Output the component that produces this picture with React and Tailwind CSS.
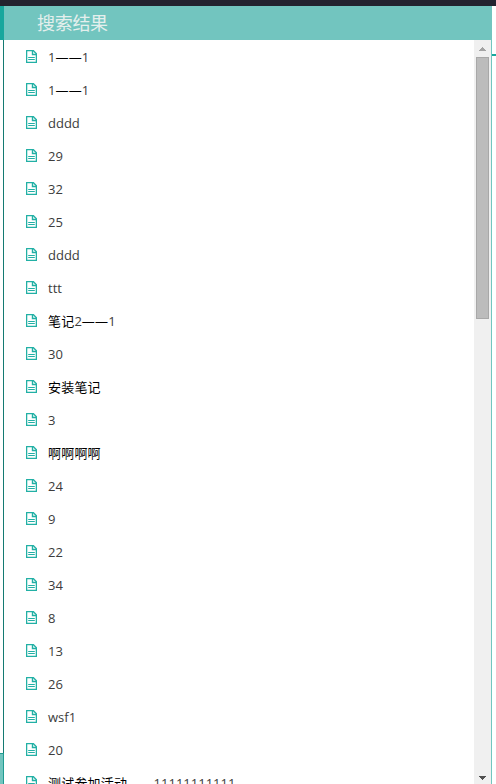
const results = [
  "1——1",
  "1——1",
  "dddd",
  "29",
  "32",
  "25",
  "dddd",
  "ttt",
  "笔记2——1",
  "30",
  "安装笔记",
  "3",
  "啊啊啊啊",
  "24",
  "9",
  "22",
  "34",
  "8",
  "13",
  "26",
  "wsf1",
  "20",
  "测试参加活动——11111111111",
];

function NoteIcon() {
  return (
    <svg className="w-[11px] h-[13px] shrink-0" viewBox="0 0 11 13" fill="none" stroke="#22b0a5">
      <path d="M.6.6H7.2L10.4 3.8V12.4H.6Z" strokeWidth="1.35" strokeLinejoin="round" />
      <path d="M6.5.8V4.5H10.2" strokeWidth="1.4" />
      <path d="M2.2 7.5H8.8M2.2 9.5H8.8" strokeWidth="1.1" />
    </svg>
  );
}

// CJK glyphs and dashes are darker than the latin text
function ResultTitle({ text }) {
  return (
    <span className="whitespace-nowrap pt-0.5">
      {text.split(/([\u4e00-\u9fff—]+)/).map((part, i) =>
        i % 2 ? (
          <span key={i} className="text-black tracking-[0.2px]">
            {part}
          </span>
        ) : (
          part
        )
      )}
    </span>
  );
}

function Scrollbar() {
  return (
    <div className="w-[17px] shrink-0 bg-[#f0f0f0] flex flex-col items-center justify-between">
      <div className="flex flex-col items-center">
        <div className="h-[17px] pt-[7px]">
          <svg className="w-[7px] h-1" viewBox="0 0 7 4" fill="#a3a3a3" shapeRendering="crispEdges">
            <path d="M3 0h1v1h1v1h1v1h1v1H0V3h1V2h1V1h1z" />
          </svg>
        </div>
        <div className="w-[13px] h-[262px] bg-[#bcbcbc] border border-[#a8a8a8]" />
      </div>
      <svg className="w-[7px] h-1 mb-1" viewBox="0 0 7 4" fill="#505050" shapeRendering="crispEdges">
        <path d="M0 0h7v1H6v1H5v1H4v1H3V3H2V2H1V1H0z" />
      </svg>
    </div>
  );
}

export default function App() {
  return (
    <div className="w-[496px] h-[784px] overflow-hidden flex flex-col bg-white font-['Open_Sans','Noto_Sans_CJK_SC',sans-serif]">
      <div className="h-1.5 shrink-0 bg-[#23232f]" />
      <div className="flex flex-1 min-h-0">
        {/* Page behind the panel */}
        <div className="w-1 shrink-0 flex flex-col">
          <div className="h-[34px] bg-[#18a79d]" />
          <div className="h-[713px] border-r border-[#147a72]" />
          <div className="flex-1 bg-[#72c5bf] border-t border-r border-[#209b91]" />
        </div>

        <div className="flex-1 min-w-0 flex flex-col">
          <div className="h-[34px] shrink-0 pl-[33px] flex items-center bg-[#72c5bf] text-[#e4efed] text-lg leading-none tracking-[-0.3px]">
            搜索结果
          </div>
          <div className="flex flex-1 min-h-0 border-r border-[#72c5bf]">
            <ul className="flex-1 min-w-0 overflow-hidden pl-[22px] text-[13px] text-[#3c3c3c]">
              {results.map((text, i) => (
                <li key={i} className="h-[33px] flex items-center gap-[11px]">
                  <NoteIcon />
                  <ResultTitle text={text} />
                </li>
              ))}
            </ul>
            <Scrollbar />
          </div>
        </div>

        <div className="w-1 shrink-0 pt-12">
          <div className="h-0.5 bg-[#18a79d]" />
        </div>
      </div>
    </div>
  );
}
